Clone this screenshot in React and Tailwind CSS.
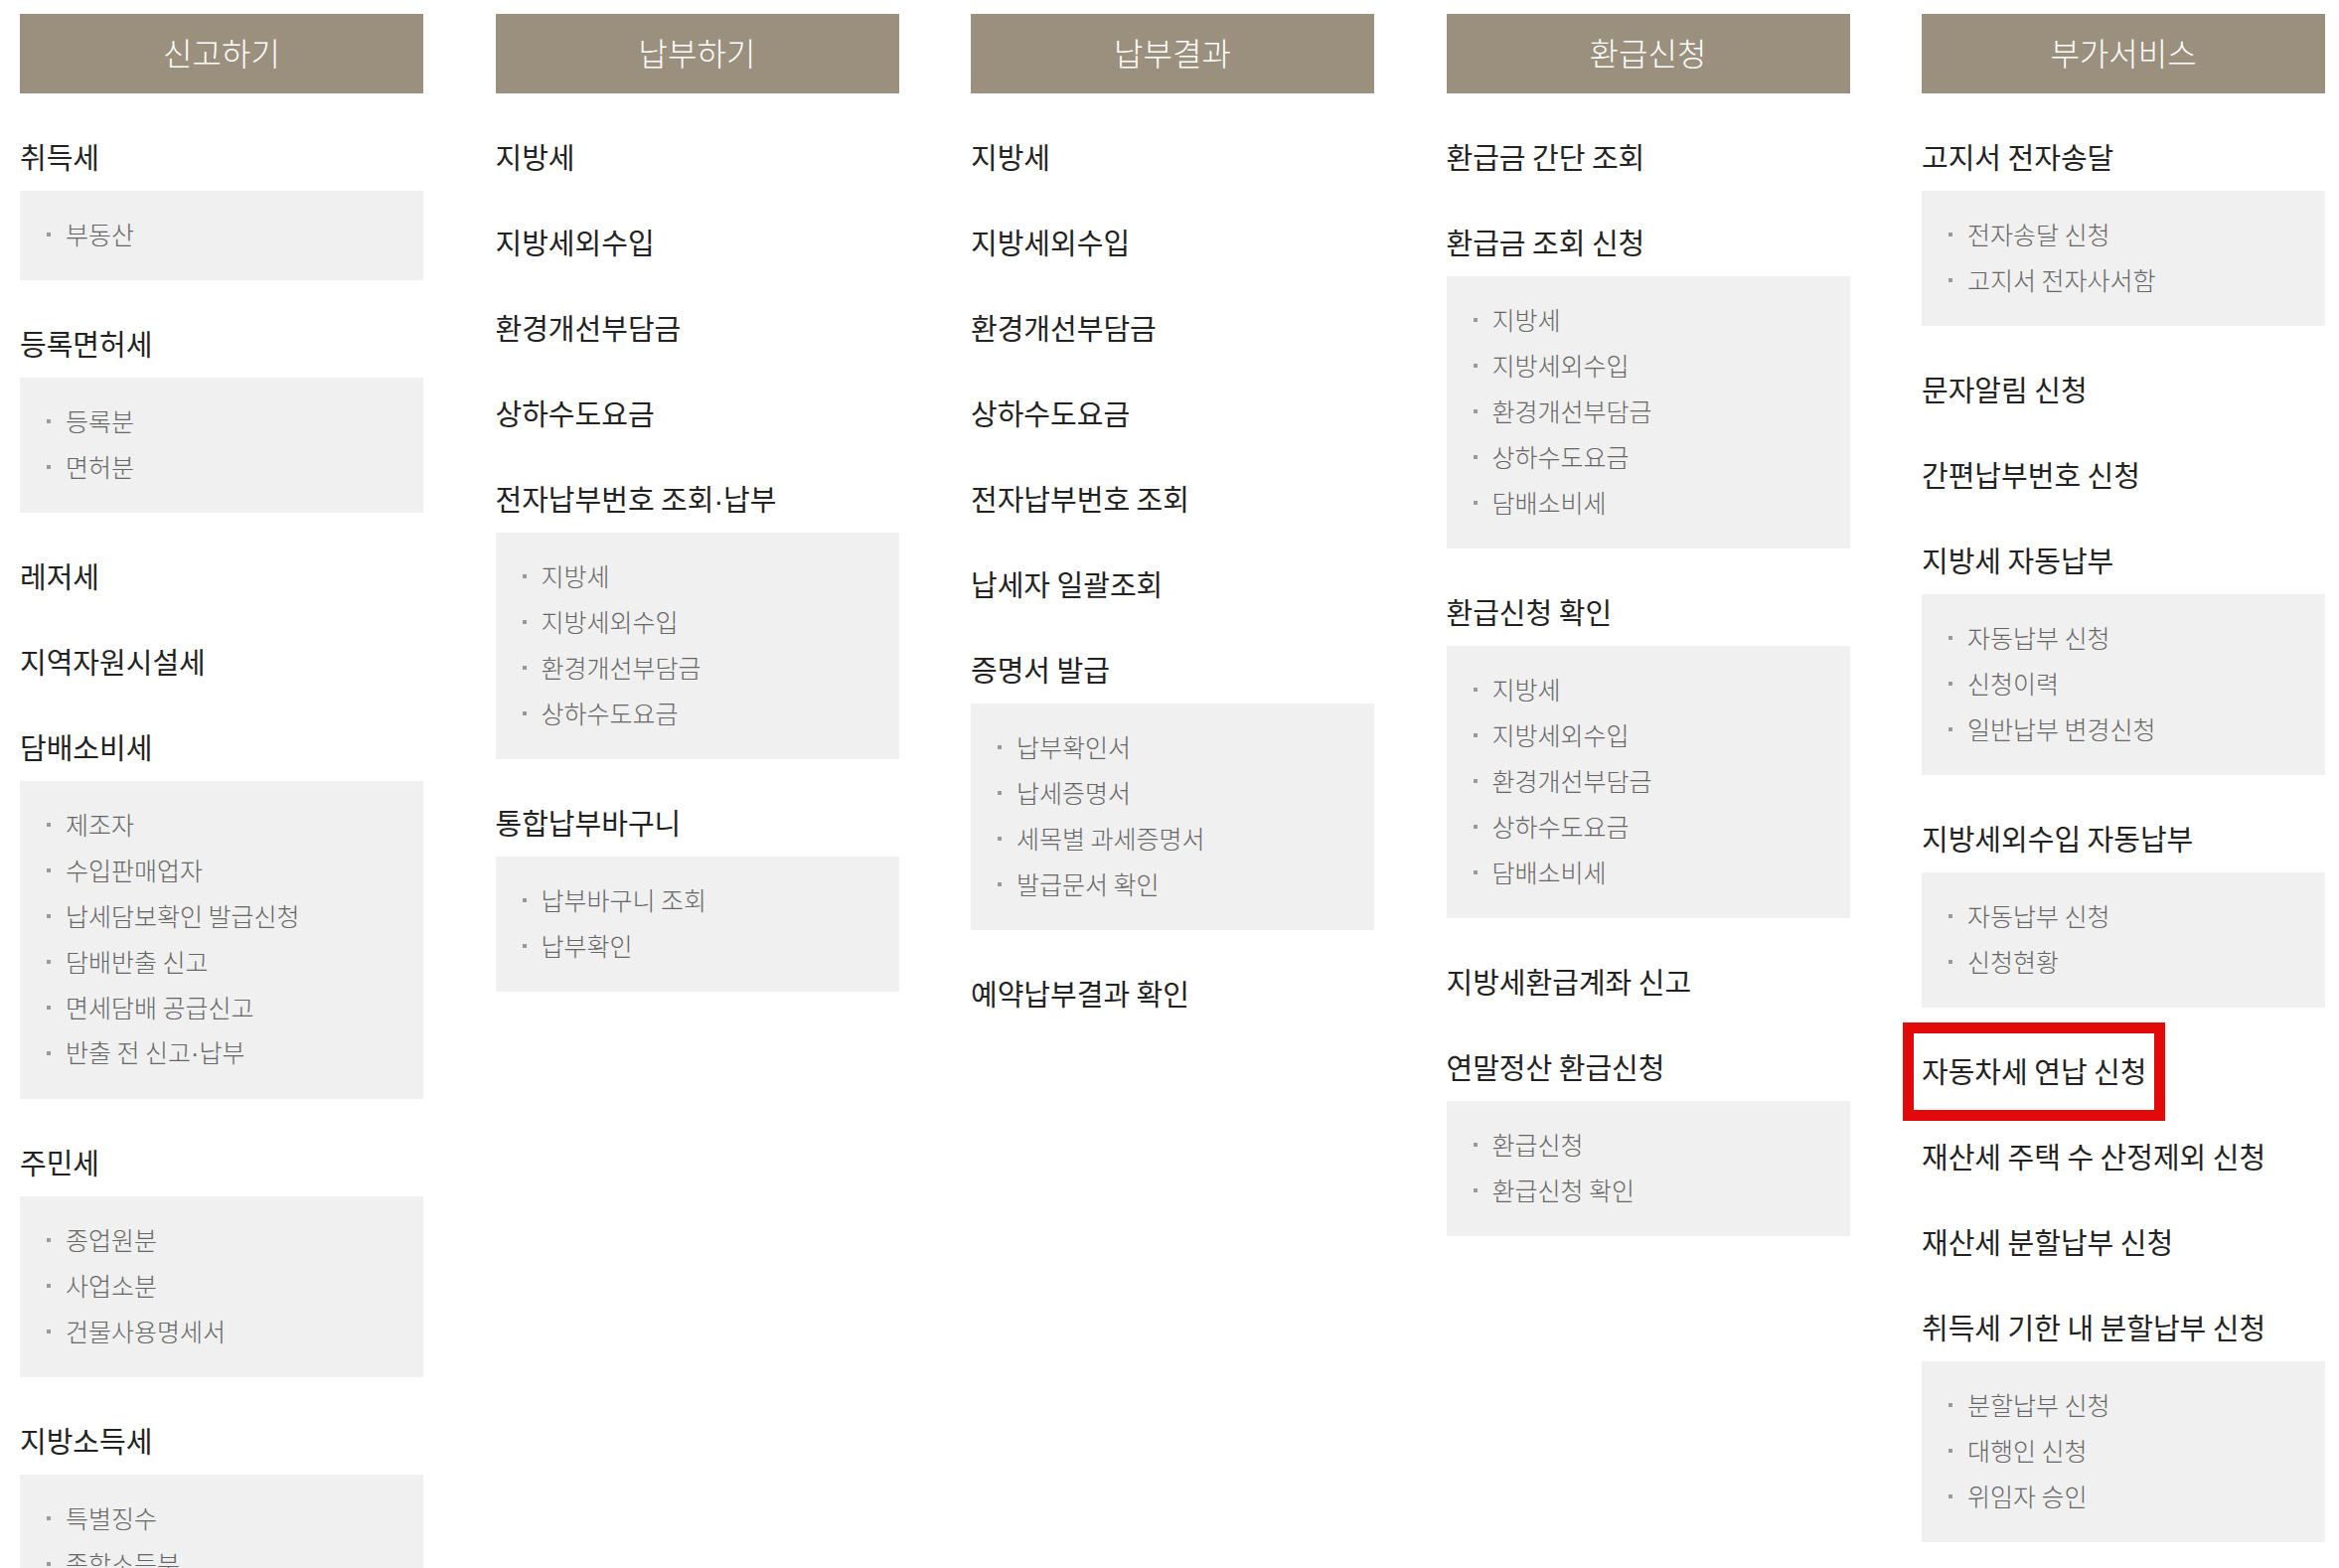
import React from "react";

const columns = [
  {
    title: "신고하기",
    sections: [
      { title: "취득세", items: ["부동산"] },
      { title: "등록면허세", items: ["등록분", "면허분"] },
      { title: "레저세" },
      { title: "지역자원시설세" },
      {
        title: "담배소비세",
        items: [
          "제조자",
          "수입판매업자",
          "납세담보확인 발급신청",
          "담배반출 신고",
          "면세담배 공급신고",
          "반출 전 신고·납부",
        ],
      },
      { title: "주민세", items: ["종업원분", "사업소분", "건물사용명세서"] },
      { title: "지방소득세", items: ["특별징수", "종합소득분", "양도소득분", "법인소득분"] },
    ],
  },
  {
    title: "납부하기",
    sections: [
      { title: "지방세" },
      { title: "지방세외수입" },
      { title: "환경개선부담금" },
      { title: "상하수도요금" },
      {
        title: "전자납부번호 조회·납부",
        items: ["지방세", "지방세외수입", "환경개선부담금", "상하수도요금"],
      },
      { title: "통합납부바구니", items: ["납부바구니 조회", "납부확인"] },
    ],
  },
  {
    title: "납부결과",
    sections: [
      { title: "지방세" },
      { title: "지방세외수입" },
      { title: "환경개선부담금" },
      { title: "상하수도요금" },
      { title: "전자납부번호 조회" },
      { title: "납세자 일괄조회" },
      {
        title: "증명서 발급",
        items: ["납부확인서", "납세증명서", "세목별 과세증명서", "발급문서 확인"],
      },
      { title: "예약납부결과 확인" },
    ],
  },
  {
    title: "환급신청",
    sections: [
      { title: "환급금 간단 조회" },
      {
        title: "환급금 조회 신청",
        items: ["지방세", "지방세외수입", "환경개선부담금", "상하수도요금", "담배소비세"],
      },
      {
        title: "환급신청 확인",
        items: ["지방세", "지방세외수입", "환경개선부담금", "상하수도요금", "담배소비세"],
      },
      { title: "지방세환급계좌 신고" },
      { title: "연말정산 환급신청", items: ["환급신청", "환급신청 확인"] },
    ],
  },
  {
    title: "부가서비스",
    sections: [
      { title: "고지서 전자송달", items: ["전자송달 신청", "고지서 전자사서함"] },
      { title: "문자알림 신청" },
      { title: "간편납부번호 신청" },
      {
        title: "지방세 자동납부",
        items: ["자동납부 신청", "신청이력", "일반납부 변경신청"],
      },
      { title: "지방세외수입 자동납부", items: ["자동납부 신청", "신청현황"] },
      { title: "자동차세 연납 신청", highlight: true },
      { title: "재산세 주택 수 산정제외 신청" },
      { title: "재산세 분할납부 신청" },
      {
        title: "취득세 기한 내 분할납부 신청",
        items: ["분할납부 신청", "대행인 신청", "위임자 승인"],
      },
    ],
  },
];

// 가운뎃점은 좁은 글꼴로 (CJK 글꼴은 폭이 넓게 나옴)
function Label({ text }) {
  const parts = text.split("·");
  return parts.map((p, i) => (
    <React.Fragment key={i}>
      {i > 0 && <span style={{ fontFamily: '"Liberation Sans", sans-serif' }}>·</span>}
      {p}
    </React.Fragment>
  ));
}

function Section({ section }) {
  return (
    <div className="mt-[44px]">
      <h3 className="h-[42px] leading-[38px] text-[29px] font-normal text-[#222] whitespace-nowrap">
        <span className="relative inline-block">
          <Label text={section.title} />
          {section.highlight && (
            <span className="absolute -left-[19px] -top-[29px] w-[264px] h-[99px] border-[11px] border-[#e10909]" />
          )}
        </span>
      </h3>
      {section.items && (
        <ul className="mt-[12px] bg-[#f0f0f0] py-[22px]">
          {section.items.map((item, i) => (
            <li key={i} className="h-[46px] flex items-center pl-[27px] pb-[3px]">
              <span className="w-[4px] h-[4px] bg-[#9a9a9a] mr-[15px]" />
              <span className="text-[25px] font-light text-[#666] whitespace-nowrap">
                <Label text={item} />
              </span>
            </li>
          ))}
        </ul>
      )}
    </div>
  );
}

export default function App() {
  return (
    <div
      className="h-[1578px] overflow-hidden bg-white pt-[14px] pl-[20px] pr-[14px]"
      style={{ fontFamily: '"Noto Sans CJK KR", "Noto Sans", sans-serif' }}
    >
      <div className="grid grid-cols-5 gap-x-[72.5px]">
        {columns.map((col) => (
          <div key={col.title}>
            <div className="h-[80px] flex items-center justify-center pb-[5px] bg-[#9b907e] text-white text-[32px] font-light">
              {col.title}
            </div>
            {col.sections.map((s, i) => (
              <Section key={i} section={s} />
            ))}
          </div>
        ))}
      </div>
    </div>
  );
}
